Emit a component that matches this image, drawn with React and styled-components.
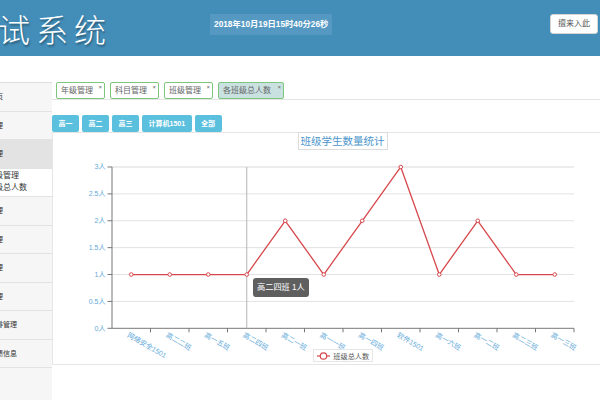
import React from "react";
import styled, { createGlobalStyle } from "styled-components";

const GlobalStyle = createGlobalStyle`
  html, body { margin: 0; padding: 0; background: #fff; }
  body {
    width: 600px; height: 400px; overflow: hidden;
    font-family: "Liberation Sans", "Noto Sans CJK SC", sans-serif;
  }
`;

const Page = styled.div`
  width: 600px;
  height: 400px;
  overflow: hidden;
  display: flex;
  flex-direction: column;
`;

const Header = styled.header`
  height: 56px;
  flex: none;
  background: #438eb9;
  display: flex;
  align-items: flex-start;
  overflow: hidden;
`;

const Title = styled.h1`
  margin: 9px 0 0 -40px;
  font-family: "Noto Sans CJK SC", sans-serif;
  font-weight: 300;
  font-size: 32px;
  line-height: 38px;
  letter-spacing: 6px;
  color: #fff;
  white-space: nowrap;
  text-shadow: 1px 2px 2px rgba(0, 0, 0, 0.35);
`;

const DateBox = styled.div`
  margin: 14px 0 0 98px;
  height: 21px;
  padding: 0 4px;
  background: #5599c3;
  color: #fff;
  font-size: 8.3px;
  font-weight: 700;
  line-height: 21px;
  white-space: nowrap;
`;

const HeaderActions = styled.div`
  margin: 14px 0 0 auto;
  display: flex;
  gap: 2px;
  margin-right: -40px;
`;

const HeaderButton = styled.button`
  height: 20px;
  width: ${(p) => p.$w}px;
  padding: 0;
  background: #fff;
  border: 1px solid #d5d5d5;
  border-radius: 3px;
  color: #555;
  font-family: inherit;
  font-size: 8px;
  line-height: 18px;
`;

const Body = styled.div`
  flex: 1;
  display: flex;
  min-height: 0;
`;

const Sidebar = styled.nav`
  width: 52px;
  flex: none;
  margin-top: 26px;
  overflow: hidden;
  background: #f6f6f6;
  border-top: 1px solid #dedede;
`;

const SidebarInner = styled.ul`
  list-style: none;
  margin: 0 0 0 -108px;
  padding: 0;
  width: 160px;
`;

const NavItem = styled.li`
  height: 27.5px;
  border-bottom: 1px solid #e2e2e2;
  background: ${(p) => (p.$active ? "#e3e3e3" : "#f6f6f6")};
  padding-left: 83px;
  font-size: 7px;
  line-height: 27.5px;
  color: #333;
  white-space: nowrap;
`;

const SubGroup = styled.li`
  border-bottom: 1px solid #e2e2e2;
  background: #fff;
  padding: 1px 0 0 95px;
  box-sizing: border-box;
  height: 28.5px;
`;

const SubItem = styled.div`
  font-size: 8px;
  line-height: 12px;
  color: #333;
  white-space: nowrap;
`;

const Main = styled.main`
  flex: 1;
  min-width: 0;
  padding-top: 26px;
  overflow: hidden;
`;

const TabBar = styled.div`
  height: 17px;
  display: flex;
  gap: 5px;
  padding-left: 4px;
  border-bottom: 1px solid #e4e4e4;
`;

const Tab = styled.div`
  position: relative;
  box-sizing: border-box;
  width: ${(p) => p.$w}px;
  height: 17px;
  padding-left: 4px;
  border: 1px solid #7dc77d;
  border-radius: 2px;
  background: ${(p) => (p.$active ? "#c9e2e1" : "#fff")};
  color: #666;
  font-size: 8px;
  line-height: 15px;
  white-space: nowrap;
`;

const TabClose = styled.span`
  position: absolute;
  top: 0px;
  right: 2px;
  font-size: 6px;
  line-height: 8px;
  color: #666;
`;

const ButtonRow = styled.div`
  display: flex;
  gap: 3px;
  margin-top: 15px;
  height: 17px;
`;

const GradeButton = styled.button`
  height: 17px;
  padding: 0 6.5px;
  border: none;
  border-radius: 2px;
  background: #5bc0de;
  color: #fff;
  font-family: inherit;
  font-size: 7px;
  font-weight: 700;
  line-height: 17px;
  white-space: nowrap;
`;

const Panel = styled.section`
  position: relative;
  box-sizing: border-box;
  width: 580px;
  height: 233px;
  border: 1px solid #e6e6e6;
  border-right: none;
`;

const TitleRow = styled.div`
  display: flex;
  justify-content: center;
  height: 17px;
  margin-top: -1px;
`;

const ChartTitle = styled.div`
  height: 18px;
  box-sizing: border-box;
  padding: 0 2px;
  border: 1px solid #dcdcdc;
  background: #fff;
  color: #4b95cc;
  font-size: 10.5px;
  line-height: 16px;
  white-space: nowrap;
`;

const ChartSvg = styled.svg`
  display: block;
`;

const Tooltip = styled.div`
  position: absolute;
  left: 200px;
  top: 145px;
  height: 19px;
  padding: 0 4px;
  border-radius: 3px;
  background: rgba(50, 50, 50, 0.78);
  color: #fff;
  font-size: 8.2px;
  line-height: 19px;
  white-space: nowrap;
`;

const cats = [
  "网络安全1501", "高二二班", "高一五班", "高二四班", "高二一班", "高一一班",
  "高一四班", "软件1501", "高一六班", "高一二班", "高二三班", "高一三班",
];
const vals = [1, 1, 1, 1, 2, 1, 2, 3, 1, 2, 1, 1];

const X0 = 59;
const X1 = 521;
const CW = (X1 - X0) / cats.length;
const Y0 = 179.3;
const YS = 53.77;
const cx = (i) => X0 + CW * (i + 0.5);
const cy = (v) => Y0 - v * YS;
const LABEL = "#62a9d9";

function Chart() {
  const ticks = [0, 0.5, 1, 1.5, 2, 2.5, 3];
  const pts = vals.map((v, i) => `${cx(i)},${cy(v)}`).join(" ");
  return (
    <ChartSvg width="580" height="214" viewBox="0 0 580 214">
      {ticks.map((t) => (
        <g key={t}>
          {t > 0 && (
            <line x1={X0} x2={X1} y1={cy(t)} y2={cy(t)} stroke={t === 3 ? "#d8d8d8" : "#e2e2e2"} strokeWidth="1" />
          )}
          <line x1={X0 - 4.5} x2={X0} y1={cy(t)} y2={cy(t)} stroke="#777" strokeWidth="1" />
          <text x={X0 - 6.5} y={cy(t)} textAnchor="end" dominantBaseline="central" fontSize="7" fill={LABEL}>
            {t}人
          </text>
        </g>
      ))}
      <line x1={X0} x2={X0} y1={cy(3)} y2={Y0} stroke="#777" strokeWidth="1" />
      <line x1={X0} x2={X1} y1={Y0} y2={Y0} stroke="#777" strokeWidth="1" />
      {cats.map((_, i) => (
        <line key={i} x1={X0 + CW * (i + 1)} x2={X0 + CW * (i + 1)} y1={Y0} y2={Y0 + 4} stroke="#777" strokeWidth="1" />
      ))}
      <line x1={cx(3)} x2={cx(3)} y1={cy(3)} y2={Y0} stroke="#b5b5b5" strokeWidth="1" />
      {cats.map((c, i) => (
        <text
          key={c + i}
          x={cx(i) - 2}
          y={Y0 + 4}
          fontSize="7"
          fill={LABEL}
          dominantBaseline="hanging"
          transform={`rotate(30 ${cx(i) - 2} ${Y0 + 4})`}
        >
          {c}
        </text>
      ))}
      <polyline points={pts} fill="none" stroke="#d6474c" strokeWidth="1.3" strokeLinejoin="round" />
      {vals.map((v, i) => (
        <circle key={i} cx={cx(i)} cy={cy(v)} r="1.8" fill="#fff" stroke="#d6474c" strokeWidth="1" />
      ))}
      <rect x="260.5" y="200.5" width="59" height="12" fill="#fff" stroke="#e6e6e6" strokeWidth="1" />
      <line x1="264" x2="277" y1="207" y2="207" stroke="#d6474c" strokeWidth="1.2" />
      <circle cx="270.5" cy="207" r="3.2" fill="#fff" stroke="#d6474c" strokeWidth="1.2" />
      <text x="280.3" y="207" fontSize="7.2" fill="#555" dominantBaseline="central">班级总人数</text>
    </ChartSvg>
  );
}

const navTop = [
  { label: "系统首页" },
  { label: "年级管理" },
  { label: "班级管理", active: true },
];
const navBottom = ["科目管理", "教师管理", "学生管理", "试题管理", "考试安排管理", "考试成绩信息"];

export default function App() {
  return (
    <Page>
      <GlobalStyle />
      <Header>
        <Title>考试系统</Title>
        <DateBox>2018年10月19日15时40分26秒</DateBox>
        <HeaderActions>
          <HeaderButton $w={48}>擅来入此</HeaderButton>
          <HeaderButton $w={40}>退出</HeaderButton>
        </HeaderActions>
      </Header>
      <Body>
        <Sidebar>
          <SidebarInner>
            {navTop.map((n) => (
              <NavItem key={n.label} $active={n.active}>{n.label}</NavItem>
            ))}
            <SubGroup>
              <SubItem>班级管理</SubItem>
              <SubItem>班级总人数</SubItem>
            </SubGroup>
            {navBottom.map((n) => (
              <NavItem key={n}>{n}</NavItem>
            ))}
          </SidebarInner>
        </Sidebar>
        <Main>
          <TabBar>
            <Tab $w={49}>年级管理<TabClose>×</TabClose></Tab>
            <Tab $w={49}>科目管理<TabClose>×</TabClose></Tab>
            <Tab $w={49}>班级管理<TabClose>×</TabClose></Tab>
            <Tab $w={66} $active>各班级总人数<TabClose>×</TabClose></Tab>
          </TabBar>
          <ButtonRow>
            <GradeButton>高一</GradeButton>
            <GradeButton>高二</GradeButton>
            <GradeButton>高三</GradeButton>
            <GradeButton>计算机1501</GradeButton>
            <GradeButton>全部</GradeButton>
          </ButtonRow>
          <Panel>
            <TitleRow>
              <ChartTitle>班级学生数量统计</ChartTitle>
            </TitleRow>
            <Chart />
            <Tooltip>高二四班 1人</Tooltip>
          </Panel>
        </Main>
      </Body>
    </Page>
  );
}
